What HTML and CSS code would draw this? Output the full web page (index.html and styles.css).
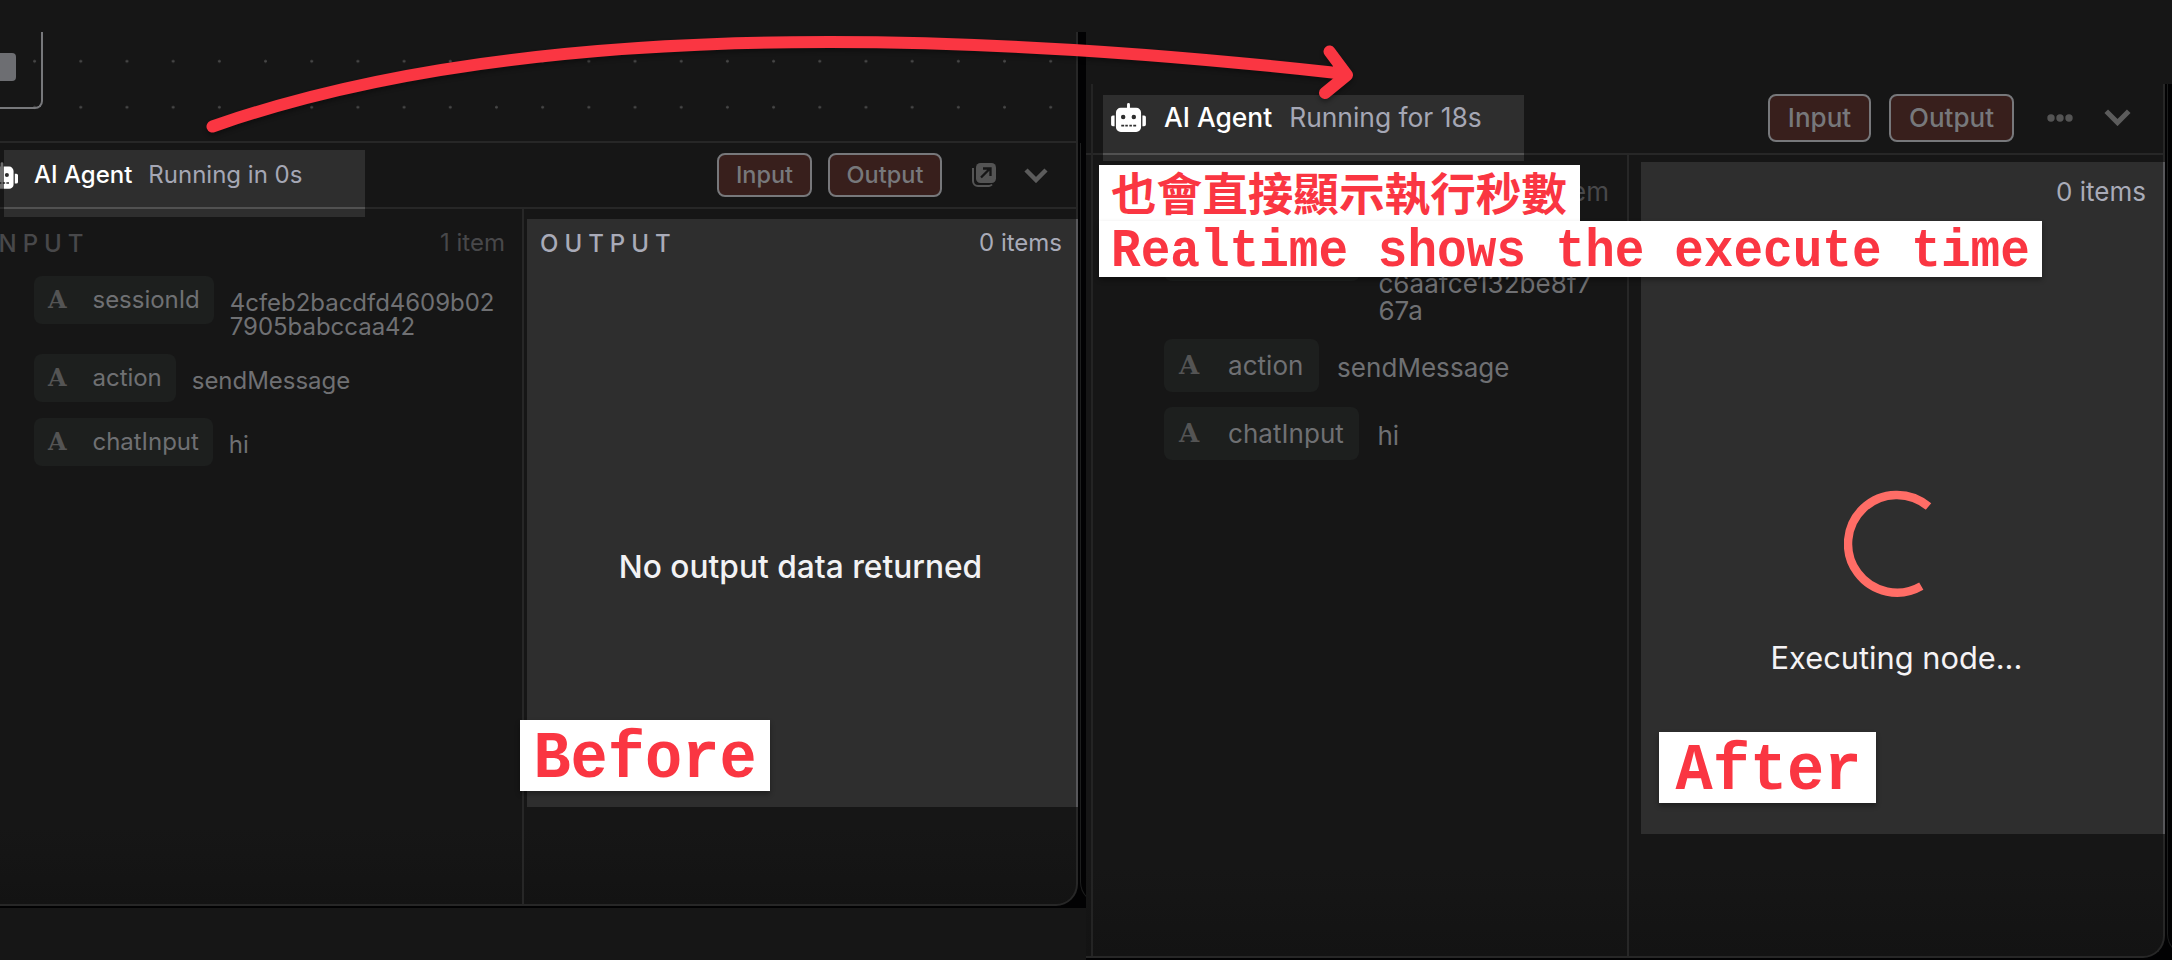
FILE: index.html
```
<!DOCTYPE html>
<html lang="zh-Hant"><head><meta charset="utf-8"><title>AI Agent run time</title><link rel="stylesheet" href="styles.css"></head>
<body>
<main class="stage">
  <section class="side before">
    <div class="canvas"><div class="node"><i></i></div></div>
    <div class="panel">
      <header class="bar">
        <svg class="robot" viewBox="0 0 36 30"><path fill="#fff" fill-rule="evenodd" d="M16.5 1.5a1.5 1.5 0 0 1 3 0V5H26a5 5 0 0 1 5 5v15a5 5 0 0 1-5 5H10a5 5 0 0 1-5-5V10a5 5 0 0 1 5-5h6.500zM10.200 14.500a2.300 2.300 0 1 0 4.600 0a2.300 2.300 0 1 0-4.600 0M21.200 14.500a2.300 2.300 0 1 0 4.600 0a2.300 2.300 0 1 0-4.600 0M10.500 22.500v1.700h3v-1.700zm4.200 0v1.700h2.600v-1.700zm4.200 0v1.700h2.600v-1.700zm4 0v1.700h3v-1.700zM1.800 13H3.600v11H1.800A1.800 1.800 0 0 1 0 22.200v-7.400A1.800 1.800 0 0 1 1.800 13M32.400 13h1.800a1.800 1.800 0 0 1 1.800 1.800v7.400a1.800 1.800 0 0 1-1.800 1.800H32.400z"/></svg>
        <b>AI Agent</b><span class="status">Running in 0s</span>
        <div class="tools"><button>Input</button><button>Output</button>
          <svg class="popout" viewBox="0 0 24 24"><path d="M1 5v13a5 5 0 0 0 5 5h11a4 4 0 0 0 3-1.500" fill="none" stroke="#545454" stroke-width="2"/><rect x="4" y="0" width="20" height="20" rx="4.500" fill="#545454"/><path d="M9 14.500 18 5.500M11 5.500h7.500v7.500" fill="none" stroke="#161616" stroke-width="2.300"/></svg>
          <svg class="chev" viewBox="0 0 24 15"><path d="m2 2 10 10L22 2" fill="none" stroke="#5c5c5c" stroke-width="4.500"/></svg>
        </div>
      </header>
      <div class="cols">
        <div class="input">
          <div class="head"><span class="cap">INPUT</span><span>1 item</span></div>
          <div class="row"><div class="chip"><em>A</em>sessionId</div><p>4cfeb2bacdfd4609b02<br>7905babccaa42</p></div>
          <div class="row"><div class="chip"><em>A</em>action</div><p>sendMessage</p></div>
          <div class="row"><div class="chip"><em>A</em>chatInput</div><p>hi</p></div>
        </div>
        <div class="output">
          <div class="head"><span class="cap">OUTPUT</span><span>0 items</span></div>
          <p class="empty">No output data returned</p>
        </div>
      </div>
    </div>
    <div class="floor"></div>
  </section>
  <section class="side after">
    <div class="panel">
      <header class="bar">
        <svg class="robot" viewBox="0 0 36 30"><path fill="#fff" fill-rule="evenodd" d="M16.500 1.500a1.500 1.500 0 0 1 3 0V5H26a5 5 0 0 1 5 5v15a5 5 0 0 1-5 5H10a5 5 0 0 1-5-5V10a5 5 0 0 1 5-5h6.500zM10.200 14.500a2.300 2.300 0 1 0 4.600 0a2.300 2.300 0 1 0-4.600 0M21.200 14.500a2.300 2.300 0 1 0 4.600 0a2.300 2.300 0 1 0-4.600 0M10.500 22.500v1.700h3v-1.700zm4.200 0v1.700h2.600v-1.700zm4.200 0v1.700h2.600v-1.700zm4 0v1.700h3v-1.700zM1.800 13H3.600v11H1.800A1.800 1.800 0 0 1 0 22.200v-7.400A1.800 1.800 0 0 1 1.800 13M32.400 13h1.800a1.800 1.800 0 0 1 1.800 1.800v7.400a1.800 1.800 0 0 1-1.800 1.800H32.400z"/></svg>
        <b>AI Agent</b><span class="status">Running for 18s</span>
        <div class="tools"><button>Input</button><button>Output</button>
          <svg class="more" viewBox="0 0 26 8"><g fill="#545454"><circle cx="4" cy="4" r="3.700"/><circle cx="13" cy="4" r="3.700"/><circle cx="22" cy="4" r="3.700"/></g></svg>
          <svg class="chev" viewBox="0 0 24 15"><path d="m2 2 10 10L22 2" fill="none" stroke="#5c5c5c" stroke-width="4.500"/></svg>
        </div>
      </header>
      <div class="cols">
        <div class="input">
          <div class="head"><span></span><span>1 item</span></div>
          <div class="row"><div class="chip"><em>A</em>sessionId</div><p><br>c6aafce132be8f7<br>67a</p></div>
          <div class="row"><div class="chip"><em>A</em>action</div><p>sendMessage</p></div>
          <div class="row"><div class="chip"><em>A</em>chatInput</div><p>hi</p></div>
        </div>
        <div class="output">
          <div class="head"><span></span><span>0 items</span></div>
          <svg class="spinner" viewBox="0 0 108 108"><path d="M85.300 16.700A49.300 49.300 0 1 0 78 97" fill="none" stroke="#ff6d66" stroke-width="8.500"/></svg>
          <p class="exec">Executing node...</p>
        </div>
      </div>
    </div>
  </section>
  <div class="glow g1"></div><div class="glow g2"></div><div class="veil"></div>
  <div class="tag t-before"><span>Before</span></div>
  <div class="tag t-after"><span>After</span></div>
  <div class="note"><div class="line zh">也會直接顯示執行秒數</div><div class="line en"><span>Realtime shows the execute time</span></div></div>
  <svg class="arrow" viewBox="0 0 2172 160"><path d="M212.500 126.500Q600-10 1346 74M1329.500 51.500 1347 75 1325 93" fill="none" stroke="#fa3642" stroke-width="12" stroke-linecap="round" stroke-linejoin="round"/></svg>
</main>
</body></html>
```
FILE: styles.css
```
* { box-sizing: border-box; }
body { margin: 0; background: #161616; font-family: Inter, "Noto Sans", sans-serif; }
p { margin: 0; }
.stage { position: relative; width: 2172px; height: 960px; overflow: hidden; display: flex; background: #161616; }
.side { display: flex; flex-direction: column; }
.before { width: 1086px; padding-top: 32px; }
.after { width: 1086px; padding-top: 84px; }

/* workflow canvas strip */
.canvas { height: 109px; width: 1078px; border-right: 2px solid #272727; background: #161616 radial-gradient(circle, #484848 1px, transparent 1.8px) 11.500px 6.300px / 46.200px 46px; }
.node { width: 43px; height: 77px; border: solid #77787b; border-width: 0 2px 2px 0; border-radius: 0 0 8px 0; padding-top: 21px; }
.node i { display: block; width: 16px; height: 28px; background: #6d6e72; border-radius: 0 4px 4px 0; }

/* log panels */
.panel { position: relative; display: flex; flex-direction: column; background: linear-gradient(#161616 90%, #131313); }
.before .panel { width: 1078px; height: 765px; border: solid #272727; border-width: 2px 2px 2px 0; border-radius: 0 0 22px 0; }
.before { background: linear-gradient(#020203, #020203) 1050px 32px / 36px 876px no-repeat; }
.after .panel { width: 1079px; height: 874px; border: solid #272727; border-width: 0 2px 2px 0; border-radius: 0 0 22px 0; }
.after { background: linear-gradient(#020203, #020203) 1050px 84px / 36px 876px no-repeat, linear-gradient(#020203, #020203) 0 958px / 1086px 2px no-repeat; }
/* edge of the neighbouring rounded panel */
.panel::after { content: ""; position: absolute; left: calc(100% + 4px); bottom: 0; top: 0; width: 26px; border: solid #1d1e1e; border-width: 0 0 1px 1px; border-radius: 0 0 0 22px; clip-path: inset(0 20px 0 0); }
.floor { flex: 1; border-top: 2px solid #020203; background: #161616; }
.bar { display: flex; align-items: center; white-space: nowrap; border-bottom: 2px solid #272727; }
.bar > * { position: relative; z-index: 2; }
.before .bar { height: 66px; font-size: 24px; }
.after .bar { height: 71px; font-size: 26.400px; padding-bottom: 2px; }
.robot { flex: none; }
.before .robot { width: 32px; height: 27px; margin-left: -14px; margin-right: 16px; }
.after .robot { width: 35px; height: 29px; margin-left: 25px; margin-right: 18px; }
.bar b { font-weight: 500; color: #fff; }
.bar b, .status { margin-top: -1px; }
.status { color: #a5a7b5; }
.before .status { margin-left: 16px; }
.after .status { margin-left: 17px; }
.tools { margin-left: auto; display: flex; align-items: center; }
button { font: 500 24px Inter, sans-serif; color: #77787b; background: #381f1c; border: 2px solid #77787b; border-radius: 8px; padding: 0 0 1px; }
.before button { width: 95px; height: 44px; font-size: 23.500px; margin-right: 16px; }
.before button + button { width: 114px; margin-right: 30px; }
.after button { width: 103px; height: 48px; font-size: 26px; margin-right: 18px; }
.after button + button { width: 125px; margin-right: 33px; }
.popout { width: 24px; height: 24px; margin-right: 28px; }
.more { width: 26px; height: 8px; margin-right: 31px; }
.chev { width: 24px; height: 15px; margin-right: 28px; }
.after .chev { width: 27px; height: 17px; margin-right: 32px; }

.cols { flex: 1; display: flex; }
.input { border-right: 2px solid #272727; color: #6f7073; }
.before .input { width: 524px; }
.after .input { width: 543px; position: relative; }
.after .input::before { content: ""; position: absolute; left: 5px; top: -71px; bottom: 0; width: 2px; background: #242424; }
.output { flex: 1; }
.head { display: flex; justify-content: space-between; white-space: nowrap; }
.before .head { font-size: 24px; line-height: 30px; height: 67px; padding-top: 19px; }
.after .head { font-size: 26px; line-height: 32px; height: 67px; padding-top: 21px; }
.before .head .cap { letter-spacing: 6px; font-weight: 500; padding-top: 1px; }
.input .head { color: #48484a; }
.before .input .head { margin-left: -14px; padding-right: 17px; }
.after .input .head { padding-right: 18px; }
.output .head { color: #a9abb8; }
.before .output .head { padding: 19px 14px 0 16px; }
.after .output .head { padding-right: 17px; }
.row { display: flex; align-items: flex-start; color: #6f7073; white-space: nowrap; }
.chip { display: flex; align-items: center; background: #1d1f1e; border-radius: 8px; }
.chip em { font-style: normal; font-family: "DejaVu Serif", serif; font-weight: 700; color: #545454; }
.before .row { margin-left: 34px; font-size: 24px; margin-bottom: 16px; min-height: 48px; letter-spacing: -.03px; }
.before .row:nth-child(2) { min-height: 62px; }
.before .chip { height: 48px; padding: 0 14px 2px 14px; }
.before .chip em { width: 44.500px; font-size: 24px; }
.before .row p { margin: 15px 0 -2px 16px; line-height: 24.300px; }
.before .row:nth-child(2) p { height: 47px; }
.after .row { margin-left: 78px; font-size: 26px; margin-bottom: 15px; min-height: 53px; letter-spacing: .05px; }
.after .row:nth-child(2) { min-height: 96px; margin-top: 6px; }
.after .chip { height: 53px; padding: 0 15.500px 1px 15px; }
.after .chip em { width: 49px; font-size: 26px; }
.after .row p { margin: 15px 0 0 18px; line-height: 27px; }
.empty { text-align: center; color: #f2f2f4; font-size: 31.700px; font-weight: 500; line-height: 40px; margin-top: 271px; padding-left: 1px; }
.spinner { display: block; width: 107px; height: 107px; margin: 268px auto 0; left: 1px; }
.exec { text-align: center; color: #f5f3f5; font-size: 30.800px; line-height: 40px; margin-top: 41px; padding-left: 1px; }
.cols, .output { position: relative; }
.output > * { position: relative; z-index: 1; }
.output::before { content: ""; position: absolute; background: #2e2e2e; border-right: 2px solid #57575a; }
.before .output::before { left: 3px; top: 10px; right: -2px; height: 588px; }
.after .output::before { left: 12px; top: 7px; right: -2px; height: 672px; }

/* spotlights over the header titles */
.glow { position: absolute; background: #2e2e2e; }
.g1 { left: 4px; top: 150px; width: 361px; height: 67px; }
.g2 { left: 1103px; top: 95px; width: 421px; height: 66px; }
.glow::after { content: ""; position: absolute; left: 0; right: 0; height: 2px; background: #515151; }
.g1::after { top: 57px; }
.g2::after { top: 58px; }
.veil { position: absolute; left: 0; top: 158px; width: 4px; height: 34px; background: #161616a0; z-index: 3; }

/* annotations */
.tag, .note { position: absolute; color: #fa3642; font-family: "Liberation Mono", monospace; font-weight: 700; z-index: 4; white-space: nowrap; }
.tag { background: #fff; height: 71px; line-height: 73px; font-size: 62px; text-align: center; box-shadow: 0 3px 5px #0005; }
.tag span, .en span { display: inline-block; transform: scaleY(1.08); position: relative; top: 3px; }
.t-before { left: 520px; top: 720px; width: 250px; }
.t-after { left: 1659px; top: 732px; width: 217px; padding-left: 2px; }
.note { left: 1099px; top: 165px; display: flex; flex-direction: column; align-items: flex-start; }
.line { background: #fff; height: 56px; padding-left: 12px; line-height: 56px; }
.zh { width: 481px; font-family: "Noto Sans CJK TC", sans-serif; font-size: 45.600px; line-height: 52px; }
.en { width: 943px; font-size: 49.400px; box-shadow: 0 3px 5px #0005; }
.arrow { position: absolute; left: 0; top: 0; width: 2172px; height: 160px; z-index: 5; filter: drop-shadow(0 3px 2px #0005); }
```
